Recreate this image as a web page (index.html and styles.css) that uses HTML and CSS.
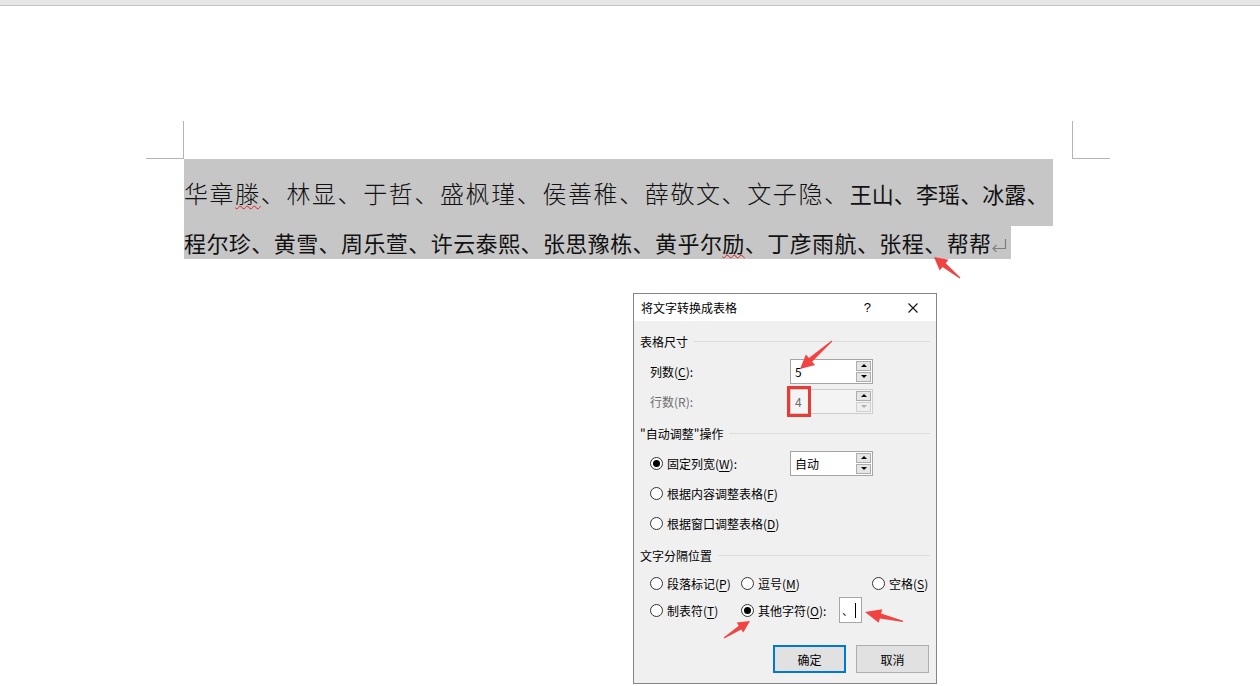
FILE: index.html
```html
<!DOCTYPE html>
<html lang="zh-CN">
<head>
<meta charset="utf-8">
<title>将文字转换成表格</title>
<link rel="stylesheet" href="styles.css">
</head>
<body>
<div class="topbar"></div>
<div class="crop"><div class="crop-l"></div><div class="crop-r"></div></div>
<div class="doc">
  <div class="line line1"><span class="big">华章<span class="wavy">滕</span>、林显、于哲、盛枫瑾、侯善稚、薛敬文、文子隐、</span><span class="small">王山、李瑶、冰露、</span></div>
  <div class="line line2">程尔珍、黄雪、周乐萱、许云泰熙、张思豫栋、黄乎尔<span class="wavy">励</span>、丁彦雨航、张程、帮帮<svg class="pm" width="16" height="14" viewBox="0 0 16 14"><path d="M14.5 1V10.5H2" fill="none" stroke="#7f7f7f" stroke-width="1.2"/><path d="M5.5 7L2 10.5L5.5 14" fill="none" stroke="#7f7f7f" stroke-width="1.2"/></svg></div>
</div>

<div class="dlg">
  <div class="dlg-title">
    <span class="ttl">将文字转换成表格</span>
    <span class="help">?</span>
    <svg class="close" width="10" height="10" viewBox="0 0 10 10"><path d="M0.5 0.5L9.5 9.5M9.5 0.5L0.5 9.5" stroke="#111" stroke-width="1.1" fill="none"/></svg>
  </div>
  <div class="dlg-body">
    <div class="grp"><span>表格尺寸</span><i></i></div>
    <div class="row r1"><span class="lbl">列数(<u>C</u>):</span><div class="spin"><span class="val">5</span><span class="btns"><b class="btn"><i class="up"></i></b><b class="btn"><i class="dn"></i></b></span></div></div>
    <div class="row dis"><span class="lbl">行数(R):</span><div class="spin"><span class="val">4</span><span class="btns"><b class="btn"><i class="up"></i></b><b class="btn"><i class="dn"></i></b></span></div></div>
    <div class="grp g2"><span>"自动调整"操作</span><i></i></div>
    <div class="row r1"><span class="radio on"></span><span class="lbl lbl-r">固定列宽(<u>W</u>):</span><div class="spin"><span class="val">自动</span><span class="btns"><b class="btn"><i class="up"></i></b><b class="btn"><i class="dn"></i></b></span></div></div>
    <div class="row"><span class="radio"></span><span>根据内容调整表格(<u>F</u>)</span></div>
    <div class="row"><span class="radio"></span><span>根据窗口调整表格(<u>D</u>)</span></div>
    <div class="grp g2"><span>文字分隔位置</span><i></i></div>
    <div class="row r6"><span class="opt o1"><span class="radio"></span>段落标记(<u>P</u>)</span><span class="opt o2"><span class="radio"></span>逗号(<u>M</u>)</span><span class="opt"><span class="radio"></span>空格(<u>S</u>)</span></div>
    <div class="row r7"><span class="opt o1"><span class="radio"></span>制表符(<u>T</u>)</span><span class="opt o2b"><span class="radio on"></span>其他字符(<u>O</u>):</span><span class="chr"><span class="sep">、</span><i class="caret"></i></span></div>
    <div class="btnrow"><span class="pb def">确定</span><span class="pb">取消</span></div>
  </div>
  <div class="redbox"></div>
</div>

<svg class="arrows" width="1260" height="686" viewBox="0 0 1260 686">
  <polygon points="800,369 805.9,354.5 808.9,357.9 831.7,340.6 832.3,341.4 812.1,361.7 815.1,365.1"/>
  <polygon points="934,257 948.5,259.8 945.7,263.3 960.4,277.5 959.6,278.5 942.5,267.1 939.7,270.6"/>
  <polygon points="750,621 743.3,632.6 741.2,629.4 724.3,638.4 723.7,637.6 738.8,625.8 736.7,622.6"/>
  <polygon points="865,612 882.3,609.2 881.1,613.6 903.1,620.8 902.9,622 879.9,618.4 878.7,622.8"/>
</svg>
</body>
</html>
```

FILE: styles.css
```css
html, body {
  margin: 0;
  padding: 0;
}
body {
  width: 1260px;
  height: 686px;
  overflow: hidden;
  position: relative;
  background: #ffffff;
  font-family: "Noto Sans CJK SC", "Noto Sans", sans-serif;
  color: #000;
}

.topbar {
  height: 5px;
  background: #e6e6e6;
  border-bottom: 1px solid #c4c4c4;
}

.crop {
  display: flex;
  justify-content: space-between;
  margin: 115px 0 0 146px;
  width: 964px;
}
.crop-l {
  width: 37px;
  height: 37px;
  border-right: 1px solid #b4b4b4;
  border-bottom: 1px solid #b4b4b4;
}
.crop-r {
  width: 37px;
  height: 37px;
  border-left: 1px solid #b4b4b4;
  border-bottom: 1px solid #b4b4b4;
}

.doc {
  margin-left: 184px;
}
.line {
  background: #c6c6c6;
  white-space: nowrap;
  color: #111;
}
.line1 {
  width: 869px;
  height: 67px;
  line-height: 67px;
}
.line1 .big {
  font-size: 24px;
  letter-spacing: 1.6px;
  font-weight: 300;
}
.line1 .small {
  font-size: 22px;
  letter-spacing: 0.1px;
}
.line2 {
  width: 827px;
  height: 33px;
  line-height: 33px;
  font-size: 22px;
  letter-spacing: 0.43px;
}
.wavy {
  text-decoration: underline wavy #e02020;
  text-decoration-thickness: 1px;
  text-underline-offset: 2px;
  text-decoration-skip-ink: none;
}
.pm {
  vertical-align: 0;
  margin-left: -1px;
}

/* dialog */
.dlg {
  position: absolute;
  left: 633px;
  top: 293px;
  width: 304px;
  box-sizing: border-box;
  border: 1px solid #858585;
  background: #f0f0f0;
  font-size: 12px;
  color: #000;
}
.dlg-title {
  height: 27px;
  background: #fff;
  display: flex;
  align-items: center;
  padding: 0 18px 0 7px;
}
.ttl {
  flex: 1;
  font-size: 12px;
}
.help {
  font-family: "Liberation Sans", sans-serif;
  font-size: 13px;
  margin-right: 37px;
}
.close {
  display: block;
}
.dlg-body {
  padding: 10px 0 10px;
}
.grp {
  display: flex;
  align-items: center;
  height: 20px;
  padding: 0 6px;
}
.grp i {
  flex: 1;
  height: 1px;
  background: #dcdcdc;
  margin-left: 6px;
}
.g2 {
  margin-top: 7px;
}
.row {
  display: flex;
  align-items: center;
  height: 30px;
  padding-left: 16px;
}
.grp + .row {
  margin-top: 5px;
}
.lbl {
  width: 140px;
  flex: none;
}
.lbl-r {
  width: 123px;
}
.dis .lbl {
  color: #6d6d6d;
}
u {
  text-decoration-thickness: 1px;
  text-underline-offset: 2px;
}

.spin {
  display: flex;
  width: 83px;
  height: 25px;
  box-sizing: border-box;
  border: 1px solid #a5a5a5;
  background: #fff;
}
.spin .val {
  flex: 1;
  padding-left: 4px;
  line-height: 23px;
}
.btns {
  width: 16px;
  display: flex;
  flex-direction: column;
  gap: 1px;
  padding: 1px 1px 1px 0;
  box-sizing: border-box;
  background: #fff;
}
.btn {
  flex: 1;
  border: 1px solid #adadad;
  background: #e5e5e5;
  display: flex;
  align-items: center;
  justify-content: center;
}
.up {
  width: 0;
  height: 0;
  border-left: 3px solid transparent;
  border-right: 3px solid transparent;
  border-bottom: 3px solid #000;
}
.dn {
  width: 0;
  height: 0;
  border-left: 3px solid transparent;
  border-right: 3px solid transparent;
  border-top: 3px solid #000;
}
.dis .spin {
  border-color: #cccccc;
  background: #f4f4f4;
}
.dis .spin .val {
  color: #6d6d6d;
}
.dis .btns {
  background: #f4f4f4;
}
.dis .btn + .btn {
  border-color: #d0d0d0;
  background: #eeeeee;
}
.dis .dn {
  border-top-color: #b0b0b0;
}

.radio {
  width: 13px;
  height: 13px;
  box-sizing: border-box;
  border: 1px solid #333;
  border-radius: 50%;
  background: #fff;
  margin-right: 4px;
  flex: none;
  display: flex;
  align-items: center;
  justify-content: center;
}
.radio.on::after {
  content: "";
  width: 7px;
  height: 7px;
  border-radius: 50%;
  background: #000;
}
.opt {
  display: flex;
  align-items: center;
  flex: none;
}
.o1 { width: 91px; }
.o2 { width: 131px; }
.o2b { width: 98px; }
.r6 { height: 26px; }
.r7 { height: 28px; }
.chr {
  width: 23px;
  height: 26px;
  box-sizing: border-box;
  border: 1px solid #a5a5a5;
  background: #fff;
  position: relative;
  display: flex;
  align-items: center;
}
.sep {
  font-size: 11px;
  margin-left: 2px;
}
.caret {
  width: 1px;
  height: 15px;
  background: #000;
  margin-left: 2px;
}
.btnrow {
  display: flex;
  justify-content: flex-end;
  gap: 10px;
  padding-right: 7px;
  margin-top: 21px;
}
.pb {
  width: 73px;
  height: 28px;
  box-sizing: border-box;
  border: 1px solid #adadad;
  background: #e1e1e1;
  display: flex;
  align-items: center;
  justify-content: center;
}
.pb.def {
  border: 2px solid #0078d7;
}
.redbox {
  position: absolute;
  left: 153px;
  top: 92px;
  width: 24px;
  height: 31px;
  box-sizing: border-box;
  border: 3px solid #ea3a35;
}

.arrows {
  position: absolute;
  left: 0;
  top: 0;
  pointer-events: none;
  fill: #f24343;
}
```
